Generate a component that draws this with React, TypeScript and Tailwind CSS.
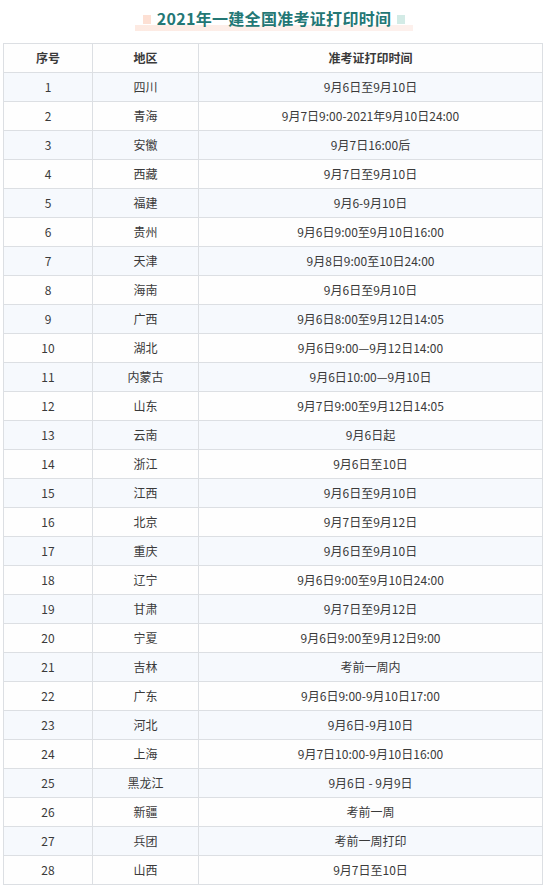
import * as React from 'react';

const rows: [string, string][] = [
  ['四川', '9月6日至9月10日'],
  ['青海', '9月7日9:00-2021年9月10日24:00'],
  ['安徽', '9月7日16:00后'],
  ['西藏', '9月7日至9月10日'],
  ['福建', '9月6-9月10日'],
  ['贵州', '9月6日9:00至9月10日16:00'],
  ['天津', '9月8日9:00至10日24:00'],
  ['海南', '9月6日至9月10日'],
  ['广西', '9月6日8:00至9月12日14:05'],
  ['湖北', '9月6日9:00—9月12日14:00'],
  ['内蒙古', '9月6日10:00—9月10日'],
  ['山东', '9月7日9:00至9月12日14:05'],
  ['云南', '9月6日起'],
  ['浙江', '9月6日至10日'],
  ['江西', '9月6日至9月10日'],
  ['北京', '9月7日至9月12日'],
  ['重庆', '9月6日至9月10日'],
  ['辽宁', '9月6日9:00至9月10日24:00'],
  ['甘肃', '9月7日至9月12日'],
  ['宁夏', '9月6日9:00至9月12日9:00'],
  ['吉林', '考前一周内'],
  ['广东', '9月6日9:00-9月10日17:00'],
  ['河北', '9月6日-9月10日'],
  ['上海', '9月7日10:00-9月10日16:00'],
  ['黑龙江', '9月6日 - 9月9日'],
  ['新疆', '考前一周'],
  ['兵团', '考前一周打印'],
  ['山西', '9月7日至10日'],
];

function Title() {
  return (
    <div className="h-[43px] flex items-start justify-center pt-[8px]">
      <div className="relative flex items-center gap-[6px] px-[8px]">
        <div className="absolute left-0 right-0 bottom-[-3px] h-[6px] bg-gradient-to-r from-[#fdeae2] via-[#fdf0ec] to-[#fdf0ec]" />
        <span className="relative w-[8px] h-[9px] bg-[#fde0d4] mt-[3px]" />
        <h1 className="relative text-[16px] font-bold tracking-[0.3px] text-[#237775] leading-[20px]">
          2021年一建全国准考证打印时间
        </h1>
        <span className="relative w-[8px] h-[9px] bg-[#d3ebe6] mt-[3px]" />
      </div>
    </div>
  );
}

export default function App() {
  return (
    <div
      className="w-[548px] h-[891px] bg-white text-[#3a3a3a] overflow-hidden"
      style={{ fontFamily: '"Noto Sans CJK SC", "Noto Sans", sans-serif' }}
    >
      <Title />
      <div className="pl-[3px]">
        <table className="border-collapse text-[12px] w-[540px] table-fixed">
          <colgroup>
            <col className="w-[89px]" />
            <col className="w-[106px]" />
            <col />
          </colgroup>
          <thead>
            <tr className="bg-[#fefefe] h-[29px]">
              <th className="border border-[#dcdfe3] font-bold text-center">序号</th>
              <th className="border border-[#dcdfe3] font-bold text-center">地区</th>
              <th className="border border-[#dcdfe3] font-bold text-center">准考证打印时间</th>
            </tr>
          </thead>
          <tbody>
            {rows.map(([area, time], i) => (
              <tr key={i} className={i % 2 === 0 ? 'bg-[#f6f9fd] h-[29px]' : 'bg-[#fefefe] h-[29px]'}>
                <td className="border border-[#dcdfe3] text-center font-normal p-0">{i + 1}</td>
                <td className="border border-[#dcdfe3] text-center font-normal p-0">{area}</td>
                <td className="border border-[#dcdfe3] text-center font-normal p-0">{time}</td>
              </tr>
            ))}
          </tbody>
        </table>
      </div>
    </div>
  );
}
